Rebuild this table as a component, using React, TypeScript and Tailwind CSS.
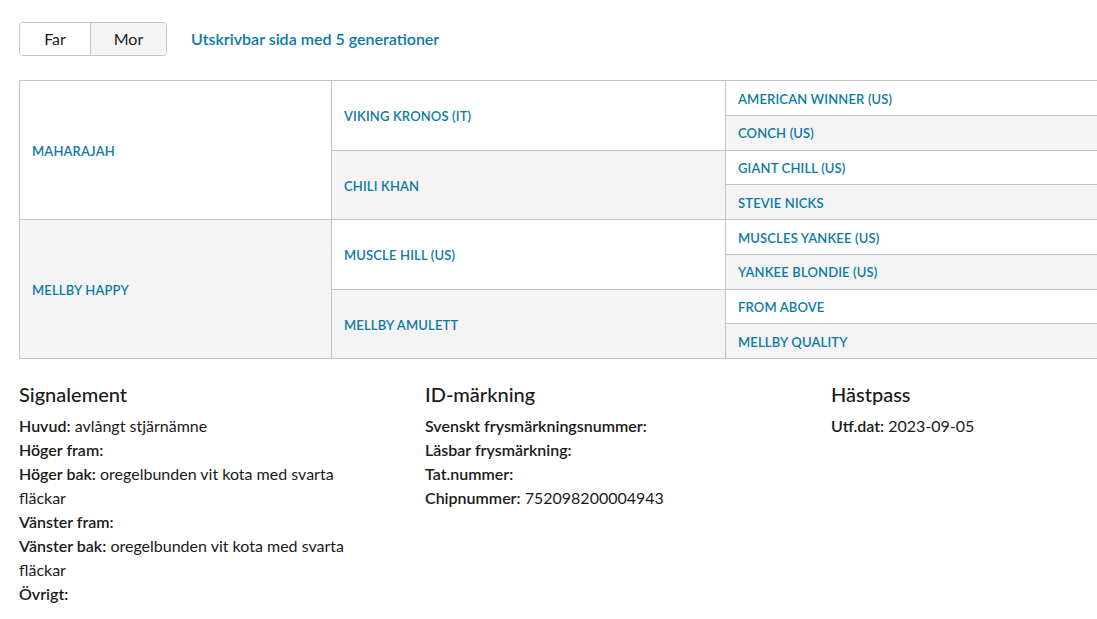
import React from "react";

const link = "text-[#0b7aa5] font-semibold uppercase text-[13px] tracking-[0.15px]";

function Cell({ name, grey, rows = 1 }: { name: string; grey?: boolean; rows?: number }) {
  return (
    <div
      className={`flex items-center pl-3 pt-[3px] border-b border-r border-[#c4c4c4] ${grey ? "bg-[#f4f4f4]" : "bg-white"}`}
      style={{ gridRow: `span ${rows} / span ${rows}` }}
    >
      <span className={link}>{name}</span>
    </div>
  );
}

function Line({ label, value }: { label: string; value?: string }) {
  return (
    <p className="leading-6">
      <span className="font-semibold">{label}</span>
      {value ? " " + value : ""}
    </p>
  );
}

export default function App() {
  return (
    <div className="min-h-screen bg-white text-[#1a1a1a] overflow-hidden" style={{ fontFamily: "Lato, 'Open Sans', sans-serif" }}>
      <div className="pl-[19px] pt-[22px]">
        <div className="flex items-center gap-6">
          <div className="flex border border-[#c6c6c6] rounded-[4px] overflow-hidden h-[34px] text-[16px]">
            <button className="w-[71px] bg-white border-r border-[#c6c6c6]">Far</button>
            <button className="w-[75px] bg-[#f4f4f4]">Mor</button>
          </div>
          <a className="text-[#0b7aa5] font-semibold text-[16px]">Utskrivbar sida med 5 generationer</a>
        </div>

        <div className="mt-[24px] w-[1120px] grid grid-cols-[312px_394px_1fr] grid-rows-[repeat(8,34.75px)] border-t border-l border-[#c4c4c4]">
          <Cell name="Maharajah" rows={4} />
          <Cell name="Viking Kronos (IT)" rows={2} />
          <Cell name="American Winner (US)" />
          <Cell name="Conch (US)" grey />
          <Cell name="Chili Khan" rows={2} grey />
          <Cell name="Giant Chill (US)" />
          <Cell name="Stevie Nicks" grey />
          <Cell name="Mellby Happy" rows={4} grey />
          <Cell name="Muscle Hill (US)" rows={2} />
          <Cell name="Muscles Yankee (US)" />
          <Cell name="Yankee Blondie (US)" grey />
          <Cell name="Mellby Amulett" rows={2} grey />
          <Cell name="From Above" />
          <Cell name="Mellby Quality" grey />
        </div>

        <div className="mt-[21px] grid grid-cols-[350px_350px_350px] gap-x-[56px] text-[16px]">
          <div>
            <h2 className="text-[20px] font-medium leading-7 mb-[6px]">Signalement</h2>
            <Line label="Huvud:" value="avlångt stjärnämne" />
            <Line label="Höger fram:" />
            <Line label="Höger bak:" value="oregelbunden vit kota med svarta fläckar" />
            <Line label="Vänster fram:" />
            <Line label="Vänster bak:" value="oregelbunden vit kota med svarta fläckar" />
            <Line label="Övrigt:" />
          </div>
          <div>
            <h2 className="text-[20px] font-medium leading-7 mb-[6px]">ID-märkning</h2>
            <Line label="Svenskt frysmärkningsnummer:" />
            <Line label="Läsbar frysmärkning:" />
            <Line label="Tat.nummer:" />
            <Line label="Chipnummer:" value="752098200004943" />
          </div>
          <div>
            <h2 className="text-[20px] font-medium leading-7 mb-[6px]">Hästpass</h2>
            <Line label="Utf.dat:" value="2023-09-05" />
          </div>
        </div>
      </div>
    </div>
  );
}
